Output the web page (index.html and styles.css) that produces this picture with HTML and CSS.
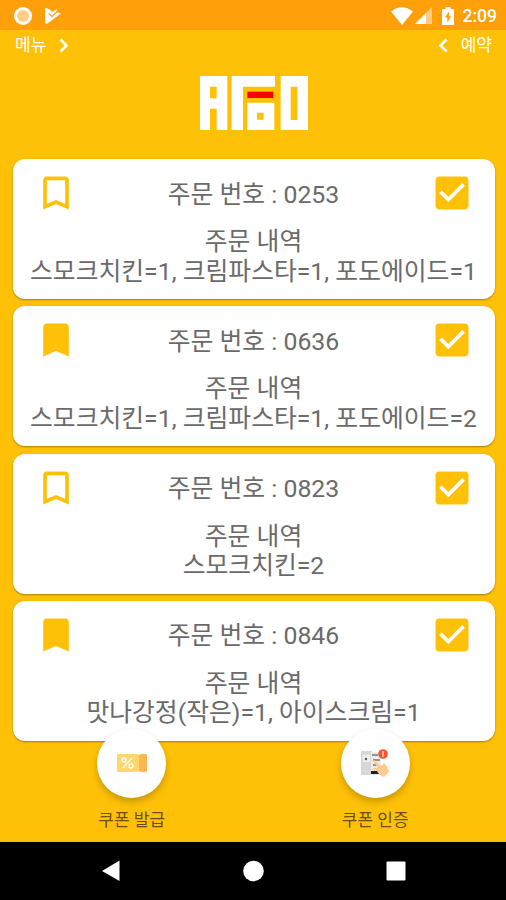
FILE: index.html
```html
<!DOCTYPE html>
<html lang="ko">
<head>
    <meta charset="UTF-8">
    <meta name="viewport" content="width=device-width, initial-scale=1.0">
    <title>주문 내역</title>
    <link rel="stylesheet" href="styles.css">
</head>
<body>

    <!-- 아이콘 -->
    <svg class="sprite" width="0" height="0">
        <symbol id="bookmark-line" viewBox="0 0 24 24">
            <path d="M17 3H7c-1.1 0-2 .9-2 2v16l7-3 7 3V5c0-1.1-.9-2-2-2zm0 15l-5-2.180L7 18V5h10v13z"/>
        </symbol>
        <symbol id="bookmark-fill" viewBox="0 0 24 24">
            <path d="M17 3H7c-1.1 0-2 .9-2 2v16l7-3 7 3V5c0-1.1-.9-2-2-2z"/>
        </symbol>
        <symbol id="checkbox" viewBox="0 0 24 24">
            <path d="M19 3H5c-1.11 0-2 .9-2 2v14c0 1.1.89 2 2 2h14c1.11 0 2-.9 2-2V5c0-1.1-.89-2-2-2zm-9 14l-5-5 1.41-1.41L10 14.17l7.59-7.59L19 8l-9 9z"/>
        </symbol>
    </svg>

    <div class="status-bar">
        <div class="status-left">
            <svg width="20" height="20" viewBox="0 0 20 20">
                <circle cx="10" cy="10" r="7.500" fill="#ffcf85" stroke="#fff" stroke-width="3"/>
            </svg>
            <svg width="18" height="18" viewBox="0 0 18 18">
                <path d="M1 1Q5 1 8 5L13 2L12.500 5L17 6.500L3.500 16.500Q1 17.500 1 15Z" fill="#fff"/>
                <path d="M4.500 6.500L8 9.500L14.500 3.500" fill="none" stroke="#ffa00a" stroke-width="1.200"/>
            </svg>
        </div>
        <div class="status-right">
            <svg class="wifi" width="22" height="18" viewBox="0 0 22 18">
                <path d="M0 4.500Q11-4 22 4.500L11 18Z" fill="#fff"/>
            </svg>
            <svg class="signal" width="17" height="17" viewBox="0 0 17 17">
                <path d="M17 0V17H0Z" fill="#ffce80"/>
                <path d="M11 6V17H0Z" fill="#fff"/>
            </svg>
            <svg class="battery" width="12" height="18" viewBox="0 0 12 18">
                <path d="M3.500 0H8.500V2H11Q12 2 12 3V17Q12 18 11 18H1Q0 18 0 17V3Q0 2 1 2H3.500Z" fill="#fff"/>
                <path d="M7 4.500L2.800 10.500H5.300V15.500L9.300 9.300H7Z" fill="#ffa00a"/>
            </svg>
            <span class="clock">2:09</span>
        </div>
    </div>

    <div class="top-menu">
        <div class="menu-link">
            <span>메뉴</span>
            <svg width="10" height="15" viewBox="0 0 10 15"><path d="M1.500 1.500L7.500 7.500L1.500 13.500"/></svg>
        </div>
        <div class="menu-link">
            <svg width="10" height="15" viewBox="0 0 10 15"><path d="M8.500 1.500L2.500 7.500L8.500 13.500"/></svg>
            <span>예약</span>
        </div>
    </div>

    <div class="logo">
        <svg width="108" height="54" viewBox="0 0 324 162">
            <path fill="#fff" fill-rule="evenodd" d="M0 0H82V162H50V98H30V162H0ZM30 32V67H50V32Z"/>
            <path fill="#fff" d="M95 0H225V32H129V162H95Z"/>
            <path fill="#f00" d="M142 47H220V66H142Z"/>
            <path fill="#fff" fill-rule="evenodd" d="M142 80H223V162H142ZM171 110V131H191V110Z"/>
            <path fill="#fff" fill-rule="evenodd" d="M242 0H324V162H242ZM272 32V132H292V32Z"/>
        </svg>
    </div>

    <div class="order-list">
        <div class="order">
            <div class="order-head">
                <svg class="icon"><use href="#bookmark-line"/></svg>
                <span>주문 번호 : 0253</span>
                <svg class="icon"><use href="#checkbox"/></svg>
            </div>
            <p>주문 내역</p>
            <p>스모크치킨=1, 크림파스타=1, 포도에이드=1</p>
        </div>
        <div class="order">
            <div class="order-head">
                <svg class="icon"><use href="#bookmark-fill"/></svg>
                <span>주문 번호 : 0636</span>
                <svg class="icon"><use href="#checkbox"/></svg>
            </div>
            <p>주문 내역</p>
            <p>스모크치킨=1, 크림파스타=1, 포도에이드=2</p>
        </div>
        <div class="order">
            <div class="order-head">
                <svg class="icon"><use href="#bookmark-line"/></svg>
                <span>주문 번호 : 0823</span>
                <svg class="icon"><use href="#checkbox"/></svg>
            </div>
            <p>주문 내역</p>
            <p>스모크치킨=2</p>
        </div>
        <div class="order">
            <div class="order-head">
                <svg class="icon"><use href="#bookmark-fill"/></svg>
                <span>주문 번호 : 0846</span>
                <svg class="icon"><use href="#checkbox"/></svg>
            </div>
            <p>주문 내역</p>
            <p>맛나강정(작은)=1, 아이스크림=1</p>
        </div>
    </div>

    <!-- 쿠폰 버튼 -->
    <div class="coupons">
        <div class="coupon">
            <div class="coupon-btn">
                <svg width="30" height="18" viewBox="0 0 30 18">
                    <path d="M1 0H20L21 1L22 0V18L21 17L20 18H1L0 17V1Z" fill="#ffd768"/>
                    <path d="M22 0L23 1L24 0H29L30 1V17L29 18H24L23 17L22 18Z" fill="#ffb74d"/>
                    <g fill="none" stroke="#fff" stroke-width="1.300">
                        <path d="M15 4L6 14"/>
                        <circle cx="7" cy="6" r="2"/>
                        <circle cx="14" cy="12" r="2"/>
                    </g>
                </svg>
            </div>
            <span>쿠폰 발급</span>
        </div>
        <div class="coupon">
            <div class="coupon-btn">
                <svg width="30" height="30" viewBox="0 0 30 30">
                    <path d="M1 3H12V27H1Z" fill="#d6d8da"/>
                    <path d="M3 7H10V14H3Z" fill="#eceeef"/>
                    <circle cx="6" cy="11" r="1.200" fill="#555"/>
                    <path d="M11 4H21V27H11Z" fill="#e9ebed"/>
                    <path d="M12 7H18M13 12H20M13 17H16" stroke="#777" stroke-width="1.500"/>
                    <path d="M11 24.500H19" stroke="#222" stroke-width="3"/>
                    <path d="M13 13L14.500 12L21 18L24 15Q28 18 29 24L24 29Q19 27 17 23L12 21.500Q14 19 18 20Z" fill="#ffcc8f"/>
                    <circle cx="23" cy="6" r="4.800" fill="#f9532d"/>
                    <path d="M23 3V9" stroke="#ffd0c4" stroke-width="1.500"/>
                </svg>
            </div>
            <span>쿠폰 인증</span>
        </div>
    </div>

    <div class="nav-bar">
        <svg width="22" height="22" viewBox="0 0 22 22"><path d="M20.500 .5V21L3 11Z"/></svg>
        <svg width="22" height="22" viewBox="0 0 22 22"><circle cx="11.500" cy="11" r="10.300"/></svg>
        <svg width="22" height="22" viewBox="0 0 22 22"><rect x="1.500" y="1.500" width="19" height="19" rx="1"/></svg>
    </div>

</body>
</html>
```

FILE: styles.css
```css
* {
    margin: 0;
    padding: 0;
    box-sizing: border-box;
}

body {
    width: 506px;
    height: 900px;
    display: flex;
    flex-direction: column;
    overflow: hidden;
    background: #ffc107;
    font-family: Roboto, 'Noto Sans CJK KR', sans-serif;
}

svg {
    display: block;
    flex-shrink: 0;
}

.sprite {
    display: none;
}

/* 상태바 */
.status-bar {
    height: 30px;
    padding: 1px 9px 0 13px;
    display: flex;
    justify-content: space-between;
    align-items: center;
    background: #ffa00a;
    color: #fff;
}

.status-left,
.status-right {
    display: flex;
    align-items: center;
}

.status-left {
    gap: 11px;
}

.signal {
    margin-left: 2px;
}

.battery {
    margin-left: 10px;
}

.clock {
    margin-left: 9px;
    padding-top: 1px;
    font-size: 17.5px;
    font-weight: 500;
    line-height: 29px;
}

.top-menu {
    height: 30px;
    padding: 0 14px 0 15px;
    display: flex;
    justify-content: space-between;
    align-items: center;
    color: #fff;
    font-size: 17px;
    line-height: 30px;
}

.menu-link {
    display: flex;
    align-items: center;
    gap: 13px;
}

.menu-link path {
    fill: none;
    stroke: #fff;
    stroke-width: 2.6;
}

.logo {
    height: 99.4px;
    padding: 16px 0 0 200px;
}

/* 주문 카드 */
.order-list {
    padding: 0 11.5px 0 12.5px;
    display: flex;
    flex-direction: column;
    gap: 7.1px;
}

.order {
    height: 140px;
    padding-top: 12px;
    border-radius: 12px;
    background: #fff;
    box-shadow: 0 1px 2px rgba(0, 0, 0, 0.35);
    color: #6a6a6a;
    font-size: 24.8px;
    line-height: 29.5px;
    text-align: center;
}

.order-head {
    height: 44px;
    margin-bottom: 12px;
    padding: 0 21px;
    display: flex;
    justify-content: space-between;
    align-items: center;
}

.order-head span {
    padding-top: 3px;
}

.icon {
    width: 44px;
    height: 44px;
    fill: #ffc107;
}

.order p {
    white-space: nowrap;
}

/* 하단 쿠폰 버튼, 마지막 카드 위로 살짝 올라감 */
.coupons {
    position: relative;
    height: 113.3px;
    margin: -12px 9px 0 10px;
    display: grid;
    grid-template-columns: 1fr 1fr;
}

.coupon {
    display: flex;
    flex-direction: column;
    align-items: center;
    gap: 10px;
    color: #6b5108;
    font-size: 17px;
    line-height: 24px;
}

.coupon-btn {
    width: 69px;
    height: 69px;
    display: flex;
    justify-content: center;
    align-items: center;
    border-radius: 50%;
    background: #fff;
    box-shadow: 0 4px 7px rgba(0, 0, 0, 0.22);
}

/* 네비게이션 바 */
.nav-bar {
    flex: 1;
    padding: 0 99px;
    display: flex;
    justify-content: space-between;
    align-items: center;
    background: #000;
}

.nav-bar svg {
    fill: #fff;
}
```
